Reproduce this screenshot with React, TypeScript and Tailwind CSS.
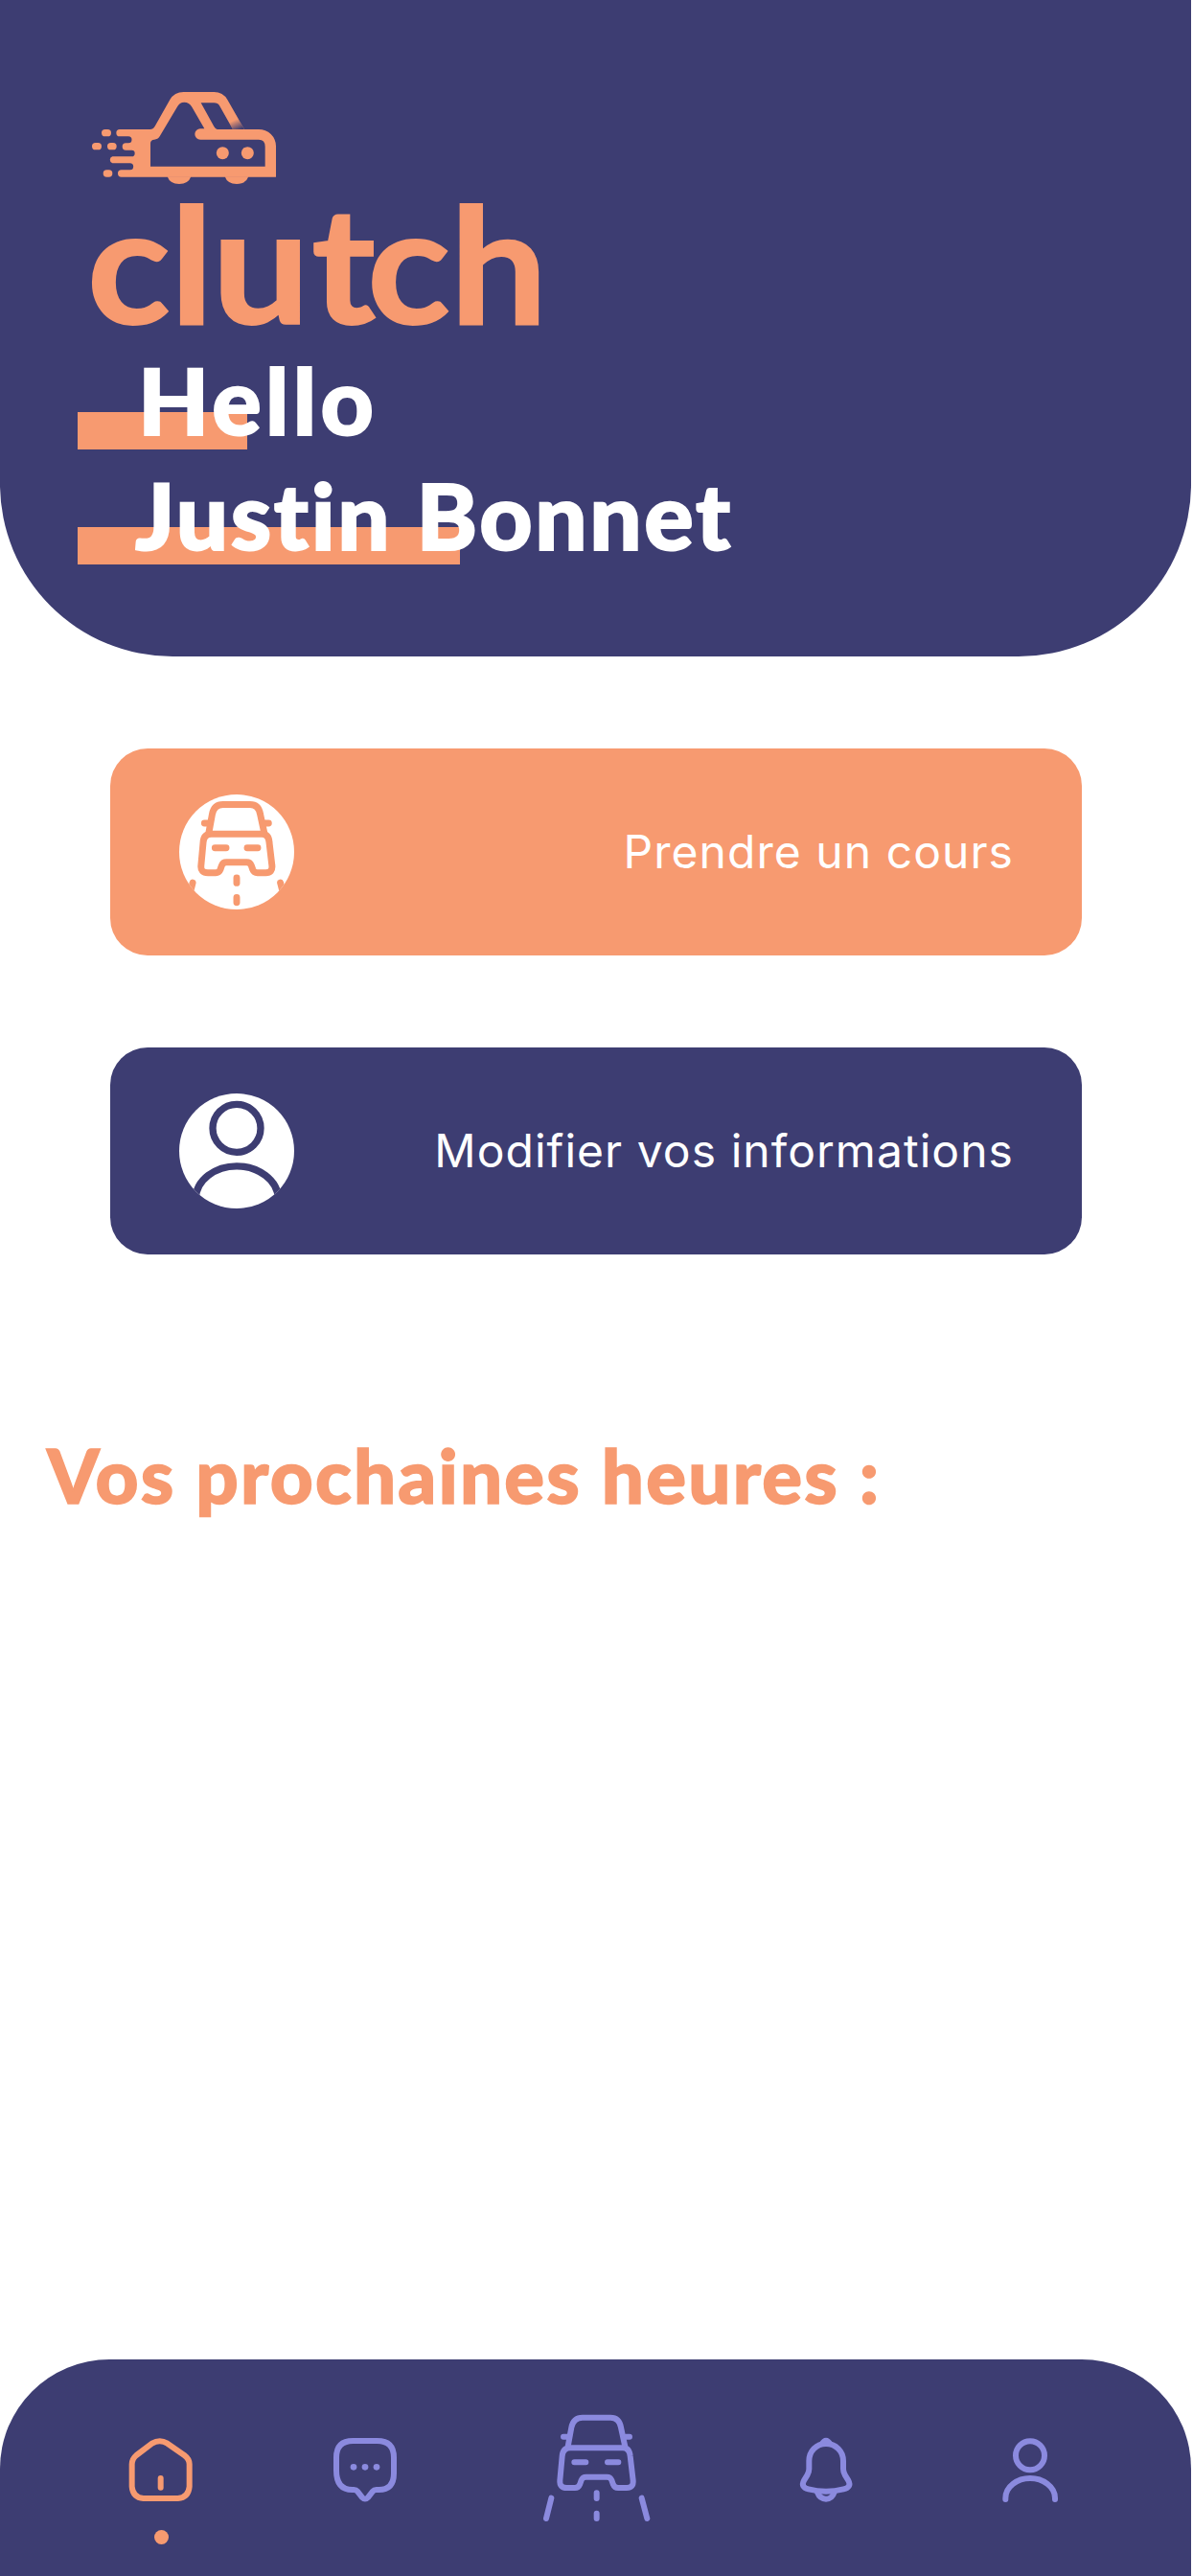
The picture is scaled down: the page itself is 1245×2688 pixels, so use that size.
import type { ReactNode } from "react";

function Logo() {
  return (
    <svg width="540" height="310" viewBox="0 0 540 310" fill="#f79a70" role="img" aria-label="clutch">
      <defs>
        <linearGradient id="shade" gradientUnits="userSpaceOnUse" x1="558" y1="134" x2="572" y2="165">
          <stop offset="0" stopColor="#3d3d72" stopOpacity="0" />
          <stop offset="1" stopColor="#3d3d72" />
        </linearGradient>
      </defs>
      <g transform="scale(0.33333)">
        <path
          fillRule="evenodd"
          d="M195 165H290Q299 165 305 155L352 72Q366 48 395 48H490Q518 48 532 72L585 165H630A54 52 0 0 1 684 217V314H200A11 11 0 0 1 200 292H227A10 10 0 0 0 227 271H172A11 11 0 0 1 172 250H232A10 10 0 0 0 232 230H214A11 11 0 0 1 214 208H222A10 10 0 0 0 222 187H195A11 11 0 0 1 195 165Z
          M291 281V209Q291 198 303 197Q314 197 320 187L374 96Q382 80 397 80Q412 80 421 95L460 163H447A16.500 16.500 0 0 0 447 197H630Q650 197 650 219V281Z
          M449 82H490Q502 82 508 92L549 165H500Q494 163 490 156Z"
        />
        <path d="M530 130H565L585 165H549Z" fill="url(#shade)" />
        <path d="M344 313Q352 336 381 336Q410 336 418 313ZM524 313Q532 336 561 336Q590 336 598 313Z" />
        <circle cx="517" cy="239" r="19.500" />
        <circle cx="595" cy="239" r="19.500" />
        <rect x="138" y="165" width="30" height="22" rx="11" />
        <rect x="108" y="207" width="30" height="22" rx="11" />
        <rect x="156" y="207" width="29" height="22" rx="11" />
        <rect x="143" y="292" width="29" height="22" rx="11" />
      </g>
      <text
        transform="scale(1.07 1)"
        y="258"
        x="29 110 151 248 302 383"
        fontFamily="Lato, sans-serif"
        fontWeight="700"
        fontSize="168"
        stroke="#f79a70"
        strokeWidth="2"
      >
        clutch
      </text>
    </svg>
  );
}

function CarArt({ stroke = 18 }: { stroke?: number }) {
  return (
    <g fill="none" stroke="currentColor" strokeWidth={stroke} strokeLinecap="round" strokeLinejoin="round">
      <path d="M157 160L168 100Q174 69 203 69H290Q318 69 323 100L336 160" />
      <path d="M165 164H328Q350 164 352 190L361 266Q363 289 341 289H314Q303 289 299 279L294 265Q290 255 279 255H214Q203 255 199 265L194 279Q190 289 179 289H154Q130 289 132 266L139 190Q141 164 165 164Z" />
      <path d="M143 129h12M338 129h12M177 209h36M281 209h34M247 305v17M247 369v16M105 321L89 385M388 321L405 385" />
    </g>
  );
}

function UserArt({ stroke = 18 }: { stroke?: number }) {
  return (
    <g fill="none" stroke="currentColor" strokeWidth={stroke} strokeLinecap="round">
      <circle cx="825" cy="188" r="45" />
      <path d="M748 325V321C748 285 785 259 825 259S903 285 903 321V325" />
    </g>
  );
}

function NavIcon({ box, size = "size-[72px]", children }: { box: string; size?: string; children: ReactNode }) {
  return (
    <svg className={size} viewBox={box} fill="none" stroke="currentColor" strokeWidth="18" strokeLinecap="round" strokeLinejoin="round">
      {children}
    </svg>
  );
}

function Highlight({ text, bar }: { text: ReactNode; bar: string }) {
  return (
    <div className="relative h-[120px]">
      <div className={`absolute left-0 top-[60px] h-[39px] bg-[#f79a70] ${bar}`} />
      <div className="relative pl-[60px] leading-[94px]">{text}</div>
    </div>
  );
}

function ActionCard({ color, label, children }: { color: string; label: string; children: ReactNode }) {
  return (
    <button className={`flex h-[216px] w-full items-center justify-between rounded-[39px] px-[72px] ${color}`}>
      <span className="size-[120px] overflow-hidden rounded-full bg-white">{children}</span>
      <span className="-mr-px text-[48px] tracking-[1.05px] text-white">{label}</span>
    </button>
  );
}

export default function App() {
  return (
    <div className="flex h-[2688px] w-[1243px] flex-col bg-white font-['Inter',sans-serif]">
      <header className="h-[685px] shrink-0 rounded-b-[180px] bg-[#3d3d72] pt-[80px]">
        <div className="ml-[60px] h-[290px]">
          <Logo />
        </div>
        <h1 className="ml-[81px] whitespace-nowrap font-['Lato',sans-serif] text-[96px] font-black text-white [-webkit-text-stroke:2px_#ffffff]">
          <Highlight bar="w-[177px]" text={<span className="ml-[3px] tracking-[4.4px]">Hello</span>} />
          <Highlight bar="w-[399px]" text={<span className="tracking-[2.6px]">Justin Bonnet</span>} />
        </h1>
      </header>

      <main className="flex-1">
        <div className="ml-[115px] mt-[96px] flex w-[1014px] flex-col gap-[96px]">
          <ActionCard color="bg-[#f79a70] text-[#f79a70]" label="Prendre un cours">
            <svg viewBox="51 57 360 360" className="size-full">
              <g transform="translate(-8.6 21.8) scale(0.97)">
                <CarArt stroke={21.500} />
              </g>
            </svg>
          </ActionCard>
          <ActionCard color="bg-[#3d3d72] text-[#3d3d72]" label="Modifier vos informations">
            <svg viewBox="52 63 360 360" className="size-full">
              <g transform="translate(-1143 -141.300) scale(1.6667)">
                <UserArt stroke={13.200} />
              </g>
            </svg>
          </ActionCard>
        </div>
        <h2 className="ml-[49px] mt-[177px] whitespace-nowrap font-['Lato',sans-serif] text-[78px] font-black leading-[106px] tracking-[2.2px] text-[#f79a70] [-webkit-text-stroke:1.5px_#f79a70]">
          Vos prochaines heures :
        </h2>
      </main>

      <nav className="flex h-[226px] shrink-0 items-center gap-[141.3px] rounded-t-[114px] bg-[#3d3d72] pl-[132px] pt-[4px] text-[#8b8adf]">
        <div className="relative text-[#f79a70]">
          <NavIcon box="97 124 216 216">
            <path d="M114 215Q114 199 128 187L177 150Q201 136 225 150L278 187Q294 199 294 215V285Q291 319 258 322H150Q117 319 114 285Z" />
            <path d="M204 259V288" />
          </NavIcon>
          <span className="absolute left-[29px] top-[99px] size-[15px] rounded-full bg-current" />
        </div>
        <NavIcon box="737 124 216 216">
          <path d="M807 142H883Q935 142 935 194V243Q935 295 888 295H880Q873 295 869 300L855 318Q845 329 835 318L821 300Q817 295 810 295H805Q755 295 755 235V194Q755 142 807 142Z" />
          <g fill="currentColor" stroke="none">
            <circle cx="809" cy="224" r="10" />
            <circle cx="845" cy="224" r="10" />
            <circle cx="881" cy="224" r="10" />
          </g>
        </NavIcon>
        <NavIcon box="56 43 378 378" size="size-[126px]">
          <CarArt />
        </NavIcon>
        <NavIcon box="77 124 216 216">
          <path d="M185 151C155 151 132 174 132 205V230Q132 239 127 248L116 266Q105 287 130 293Q185 307 240 293Q266 287 255 266L244 248Q239 239 239 230V205C239 174 215 151 185 151Z" />
          <path d="M163 149Q173 132 185 132Q197 132 207 149Z" fill="currentColor" stroke="none" />
          <path d="M158 303Q166 324 185 324Q204 324 211 303" />
        </NavIcon>
        <NavIcon box="717 124 216 216">
          <UserArt />
        </NavIcon>
      </nav>
    </div>
  );
}
